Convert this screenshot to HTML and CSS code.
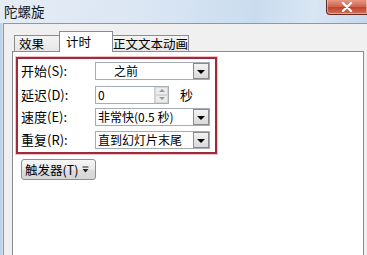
FILE: index.html
```html
<!DOCTYPE html>
<html lang="zh-CN">
<head>
    <meta charset="UTF-8" />
    <title>陀螺旋</title>
    <link rel="stylesheet" href="styles.css">
</head>
<body>
    <div class="window">
        <!-- Title bar -->
        <div class="titlebar">
            <span class="title">陀螺旋</span>
            <button class="close-btn" title="关闭">
                <svg width="12" height="10" viewBox="0 0 12 10">
                    <path d="M2 1 L10 9 M10 1 L2 9" stroke="#fff" stroke-width="2.4" stroke-linecap="round"/>
                </svg>
            </button>
        </div>

        <!-- Client area -->
        <div class="client">
            <div class="tabs">
                <div class="tab">效果</div>
                <div class="tab active">计时</div>
                <div class="tab">正文文本动画</div>
            </div>

            <div class="panel">
                <div class="highlight">
                    <div class="row">
                        <label>开始(<u>S</u>):</label>
                        <div class="combo">
                            <span class="combo-text center">之前</span>
                            <span class="drop"><i></i></span>
                        </div>
                    </div>
                    <div class="row">
                        <label>延迟(<u>D</u>):</label>
                        <div class="spin-line">
                            <div class="spin">
                                <span class="spin-text">0</span>
                                <span class="spin-btns">
                                    <span class="up"></span>
                                    <span class="down"></span>
                                </span>
                            </div>
                            <span class="unit">秒</span>
                        </div>
                    </div>
                    <div class="row">
                        <label>速度(<u>E</u>):</label>
                        <div class="combo">
                            <span class="combo-text">非常快(0.5 秒)</span>
                            <span class="drop"><i></i></span>
                        </div>
                    </div>
                    <div class="row">
                        <label>重复(<u>R</u>):</label>
                        <div class="combo">
                            <span class="combo-text">直到幻灯片末尾</span>
                            <span class="drop"><i></i></span>
                        </div>
                    </div>
                </div>

                <button class="trigger">
                    <span>触发器(<u>T</u>)</span>
                    <svg width="7" height="7" viewBox="0 0 7 7">
                        <path d="M0.5 1 H6.5" stroke="#222" stroke-width="1"/>
                        <path d="M0.5 3 H6.5 L3.5 6.5 Z" fill="#222"/>
                    </svg>
                </button>
            </div>
        </div>
    </div>
</body>
</html>
```

FILE: styles.css
```css
/* === Reset & Font === */
body {
    margin: 0;
    width: 367px;
    height: 255px;
    overflow: hidden;
    font-family: "Noto Sans CJK SC", "Liberation Sans", sans-serif;
    font-size: 12px;
    color: #000;
}

button {
    font-family: inherit;
}

/* === Window frame === */
.window {
    display: flex;
    flex-direction: column;
    height: 255px;
    background: linear-gradient(90deg, #b8cde6 0, #dce7f4 4px, #dce7f4 100%);
}

.titlebar {
    height: 23px;
    display: flex;
    align-items: flex-start;
    justify-content: space-between;
    background: linear-gradient(100deg, #e4ecf6 0%, #dbe6f3 40%, #c9dcef 70%, #d9e6f3 85%, #c6d8ec 100%);
}

    .titlebar .title {
        margin: 3px 0 0 4px;
        font-size: 13.5px;
        line-height: 16px;
        color: #1a1a1a;
    }

.close-btn {
    width: 42px;
    height: 16px;
    margin: -1px -1px 0 0;
    padding: 0;
    display: flex;
    align-items: center;
    justify-content: center;
    border: 1px solid #5e2a22;
    border-top: none;
    border-radius: 0 0 0 4px;
    background: linear-gradient(180deg, #e9a08e 0%, #d0644c 50%, #c0432c 55%, #d0705a 100%);
    box-shadow: inset 0 0 0 1px rgba(255, 220, 210, 0.5);
}

/* === Client area === */
.client {
    flex: 1;
    margin-left: 3px;
    padding: 8px 3px 0 8px;
    background: #f0f0f0;
    border-left: 1px solid #8a99ad;
    border-top: 1px solid #8a99ad;
    display: flex;
    flex-direction: column;
}

/* === Tabs === */
.tabs {
    display: flex;
    align-items: flex-end;
    padding-left: 2px;
    height: 19px;
    position: relative;
    z-index: 1;
}

.tab {
    height: 15px;
    padding: 0 4px;
    border: 1px solid #898c95;
    border-bottom: none;
    background: linear-gradient(180deg, #f4f4f4 0%, #e6e6e6 100%);
    font-size: 12.5px;
    line-height: 16px;
    white-space: nowrap;
    margin-left: -1px;
}

    .tab:first-child {
        width: 38px;
        margin-left: 0;
    }

    .tab.active {
        height: 20px;
        width: 42px;
        margin: 0 -2px -1px -3px;
        padding-left: 6px;
        background: #fff;
        position: relative;
        z-index: 2;
        line-height: 20px;
    }

    .tab:last-child {
        padding: 0 0 0 2px;
    }

/* === Panel === */
.panel {
    flex: 1;
    background: #fff;
    border: 1px solid #898c95;
    border-bottom: none;
    padding: 5px 0 0 3px;
}

.highlight {
    width: 194px;
    padding: 3px 0 3px 3px;
    border: 2px solid #9b2c3a;
    box-shadow: 0 0 0 1px #f2c2c8;
    display: flex;
    flex-direction: column;
    gap: 5px;
}

.row {
    display: grid;
    grid-template-columns: 74px 115px;
    align-items: center;
    height: 18px;
}

    .row label {
        font-size: 13px;
        line-height: 18px;
        white-space: nowrap;
    }

    .row u, .trigger u {
        text-decoration: none;
    }

/* === Combo boxes === */
.combo {
    height: 16px;
    border: 1px solid #a5acb5;
    display: flex;
    align-items: center;
    justify-content: space-between;
    overflow: hidden;
}

.combo-text {
    padding-left: 2px;
    line-height: 16px;
    font-size: 12px;
    white-space: nowrap;
}

    .combo-text.center {
        padding-left: 18px;
    }

.drop {
    flex: none;
    width: 16px;
    height: 16px;
    border: 1px solid #8a8a8a;
    box-sizing: border-box;
    background: linear-gradient(180deg, #f2f2f2 0%, #dadada 100%);
    display: flex;
    align-items: center;
    justify-content: center;
}

    .drop i {
        width: 0;
        height: 0;
        border-left: 4px solid transparent;
        border-right: 4px solid transparent;
        border-top: 4px solid #000;
        margin-top: 1px;
    }

/* === Spinner === */
.spin-line {
    display: flex;
    align-items: center;
    gap: 11px;
}

.spin {
    width: 72px;
    height: 16px;
    border: 1px solid #a5acb5;
    display: flex;
    justify-content: space-between;
}

.spin-text {
    padding-left: 2px;
    line-height: 16px;
    font-size: 12px;
}

.spin-btns {
    width: 13px;
    display: flex;
    flex-direction: column;
    border-left: 1px solid #d0d0d0;
}

    .spin-btns span {
        flex: 1;
        background: #ececec;
        border: 1px solid #d6d6d6;
        display: flex;
        align-items: center;
        justify-content: center;
    }

    .spin-btns .up::after {
        content: "";
        border-left: 3px solid transparent;
        border-right: 3px solid transparent;
        border-bottom: 3px solid #9a9a9a;
    }

    .spin-btns .down::after {
        content: "";
        border-left: 3px solid transparent;
        border-right: 3px solid transparent;
        border-top: 3px solid #9a9a9a;
    }

.unit {
    font-size: 13px;
}

/* === Trigger button === */
.trigger {
    margin: 5px 0 0 5px;
    width: 75px;
    height: 21px;
    padding: 0 0 0 3px;
    display: flex;
    align-items: center;
    gap: 4px;
    border: 1px solid #8e8f8f;
    border-radius: 3px;
    background: linear-gradient(180deg, #f6f6f6 0%, #e9e9e9 50%, #dcdcdc 51%, #d6d6d6 100%);
    font-size: 12.5px;
    line-height: 16px;
    white-space: nowrap;
    color: #000;
}
```
